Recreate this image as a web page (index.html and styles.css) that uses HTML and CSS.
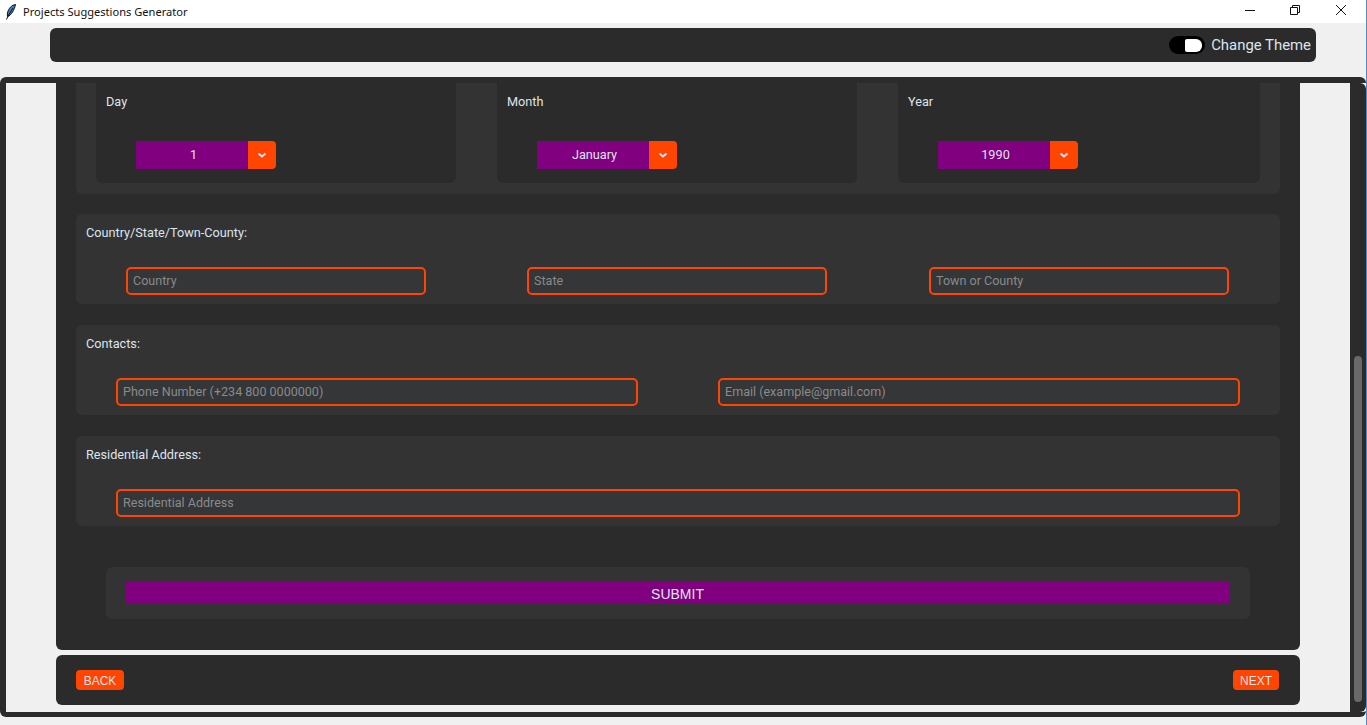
FILE: index.html
```html
<!DOCTYPE html>
<html lang="en">

<head>
    <meta charset="utf-8">
    <meta name="viewport" content="width=device-width, initial-scale=1">
    <title>Projects Suggestions Generator</title>
    <link rel="stylesheet" href="styles.css">
</head>

<body>
    <header class="titlebar">
        <svg class="app-icon" width="12" height="16" viewBox="0 0 12 16">
            <path d="M10.5 .5C7 1 3.5 4 2.5 9c-.3 1.500-.2 2.500.2 3.500C6 11.500 9.500 6 10.500 .5z" fill="#3f7fc4" stroke="#111" stroke-width="1"/>
            <path d="M8 4L3 12L1.500 15.500" fill="none" stroke="#111" stroke-width="1"/>
        </svg>
        <span class="app-title">Projects Suggestions Generator</span>
        <div class="window-controls">
            <svg width="10" height="10" viewBox="0 0 10 10"><path d="M0 5.500H10" stroke="#111" fill="none"/></svg>
            <svg width="10" height="10" viewBox="0 0 10 10"><path d="M.5 2.500H7.500V9.500H.5zM2.500 2.500V.5H9.500V7.500H7.500" stroke="#111" fill="none"/></svg>
            <svg width="10" height="10" viewBox="0 0 10 10"><path d="M0 0L10 10M10 0L0 10" stroke="#111" fill="none"/></svg>
        </div>
    </header>

    <div class="theme-bar">
        <label class="theme-switch">
            <span class="switch"><span class="switch-knob"></span></span>
            Change Theme
        </label>
    </div>

    <main class="frame">
        <div class="frame-body">
            <form class="scroll-panel">
                <section class="group date-group">
                    <div class="date-card">
                        <p class="label">Day</p>
                        <div class="dropdown">
                            <span class="dropdown-value">1</span>
                            <span class="dropdown-arrow"><svg width="10" height="6" viewBox="0 0 10 6"><path d="M1.500 1.500L5 4.500L8.500 1.500" fill="none" stroke="#dce4ee" stroke-width="2"/></svg></span>
                        </div>
                    </div>
                    <div class="date-card">
                        <p class="label">Month</p>
                        <div class="dropdown">
                            <span class="dropdown-value">January</span>
                            <span class="dropdown-arrow"><svg width="10" height="6" viewBox="0 0 10 6"><path d="M1.500 1.500L5 4.500L8.500 1.500" fill="none" stroke="#dce4ee" stroke-width="2"/></svg></span>
                        </div>
                    </div>
                    <div class="date-card">
                        <p class="label">Year</p>
                        <div class="dropdown">
                            <span class="dropdown-value">1990</span>
                            <span class="dropdown-arrow"><svg width="10" height="6" viewBox="0 0 10 6"><path d="M1.500 1.500L5 4.500L8.500 1.500" fill="none" stroke="#dce4ee" stroke-width="2"/></svg></span>
                        </div>
                    </div>
                </section>

                <section class="group">
                    <p class="label">Country/State/Town-County:</p>
                    <div class="fields fields-three">
                        <input class="field" placeholder="Country">
                        <input class="field" placeholder="State">
                        <input class="field" placeholder="Town or County">
                    </div>
                </section>

                <section class="group">
                    <p class="label">Contacts:</p>
                    <div class="fields fields-two">
                        <input class="field" placeholder="Phone Number (+234 800 0000000)">
                        <input class="field" placeholder="Email (example@gmail.com)">
                    </div>
                </section>

                <section class="group">
                    <p class="label">Residential Address:</p>
                    <div class="fields fields-one">
                        <input class="field" placeholder="Residential Address">
                    </div>
                </section>

                <div class="submit-box">
                    <button type="button" class="submit">SUBMIT</button>
                </div>
            </form>

            <nav class="pager">
                <button type="button" class="pager-button">BACK</button>
                <button type="button" class="pager-button">NEXT</button>
            </nav>
        </div>
        <div class="scrollbar"><div class="scrollbar-thumb"></div></div>
    </main>
</body>

</html>
```

FILE: styles.css
```css
* {
    box-sizing: border-box;
}

html,
body {
    height: 725px;
}

body {
    margin: 0;
    overflow: hidden;
    background-color: #f0f0f0;
    border-right: 1px solid #5a86c8;
    font-family: Roboto, "Liberation Sans", sans-serif;
    font-size: 12.7px;
    color: #dce4ee;
}

.titlebar {
    display: flex;
    align-items: center;
    height: 23px;
    padding-left: 5px;
    background-color: #fff;
    color: #111;
}

.app-icon {
    margin-right: 6px;
}

.app-title {
    font-family: "Noto Sans", sans-serif;
    font-size: 11.1px;
}

.window-controls {
    display: flex;
    gap: 36px;
    margin: 0 20px 3px auto;
}

.window-controls svg:first-child {
    margin-right: -1px;
}

.theme-bar {
    display: flex;
    justify-content: flex-end;
    height: 34px;
    margin: 5px 50px 15px;
    padding-right: 5px;
    border-radius: 6px;
    background-color: #2b2b2b;
}

.theme-switch {
    display: flex;
    align-items: center;
    gap: 6px;
    font-size: 14.9px;
}

.switch {
    display: flex;
    align-items: center;
    width: 36px;
    height: 18px;
    padding-left: 16px;
    border-radius: 9px;
    background-color: #000;
}

.switch-knob {
    width: 17px;
    height: 13px;
    border-radius: 2px 6px 6px 2px;
    background-color: #fff;
}

.frame {
    display: flex;
    height: 640px;
    border-style: solid;
    border-color: #2b2b2b;
    border-width: 6px 0 5px 6px;
    border-radius: 6px;
    background-color: #f0f0f0;
}

.frame-body {
    flex: 1;
    display: flex;
    flex-direction: column;
    gap: 5px;
    padding: 0 50px;
}

.scroll-panel {
    display: flex;
    flex-direction: column;
    gap: 21px;
    height: 567px;
    padding: 0 20px;
    overflow: hidden;
    border-radius: 0 0 6px 6px;
    background-color: #2b2b2b;
}

.group {
    flex: none;
    height: 90px;
    padding: 11px 10px 0;
    border-radius: 6px;
    background-color: #333;
}

.label {
    margin: 0;
    line-height: 15px;
}

.date-group {
    display: flex;
    justify-content: space-between;
    height: 121px;
    margin-top: -10px;
    margin-bottom: -1px;
    padding: 0 20px 0 20px;
    border-radius: 6px;
}

.date-card {
    width: 360px;
    height: 110px;
    padding: 21px 10px 0;
    border-radius: 6px;
    background-color: #2b2b2b;
}

.date-card:last-child {
    width: 362px;
}

.dropdown {
    display: flex;
    width: 140px;
    height: 28px;
    margin: 32px 0 0 30px;
    border-radius: 0 4px 4px 0;
    overflow: hidden;
}

.dropdown-value {
    flex: 1;
    padding-left: 3px;
    background-color: #800080;
    text-align: center;
    line-height: 28px;
}

.dropdown-arrow {
    display: flex;
    align-items: center;
    justify-content: center;
    width: 28px;
    background-color: #ff4500;
}

.fields {
    display: flex;
    justify-content: space-between;
    margin-top: 27px;
}

.fields-three {
    justify-content: flex-start;
    gap: 101px;
    padding: 0 40px;
}

.fields-three .field {
    width: 300px;
}

.fields-three .field:last-child {
    margin-left: 1px;
}

.fields-two {
    padding: 0 30px;
}

.fields-two .field {
    width: 522px;
}

.fields-one {
    padding: 0 30px;
}

.fields-one .field {
    width: 100%;
}

.field {
    height: 28px;
    padding: 0 5px 2px;
    border: 2px solid #ff4500;
    border-radius: 5px;
    outline: none;
    background-color: #343638;
    font-family: inherit;
    font-size: 12.55px;
    color: #dce4ee;
}

.field::placeholder {
    color: #8a8a8a;
    opacity: 1;
}

.submit-box {
    flex: none;
    height: 52px;
    margin: 20px 30px 0;
    padding: 15px 21px 0 20px;
    border-radius: 6px;
    background-color: #333;
}

.submit {
    display: block;
    width: 100%;
    height: 22px;
    padding: 1px 0 0;
    border: none;
    background-color: #800080;
    font-family: "Liberation Sans", sans-serif;
    font-size: 14px;
    color: #dce4ee;
}

.pager {
    display: flex;
    align-items: center;
    justify-content: space-between;
    height: 50px;
    padding: 0 21px 0 20px;
    border-radius: 6px;
    background-color: #2b2b2b;
}

.pager-button {
    width: 48px;
    height: 20px;
    padding: 1px 0 0;
    border: none;
    border-radius: 4px;
    background-color: #ff4500;
    font-family: "Liberation Sans", sans-serif;
    font-size: 12px;
    color: #dce4ee;
}

.pager-button:last-child {
    width: 46px;
}

.scrollbar {
    width: 16px;
    padding: 273px 4px 10px;
    background-color: #2b2b2b;
    border-radius: 0 6px 6px 0;
}

.scrollbar-thumb {
    height: 100%;
    border-radius: 4px;
    background-color: #696969;
}
```
